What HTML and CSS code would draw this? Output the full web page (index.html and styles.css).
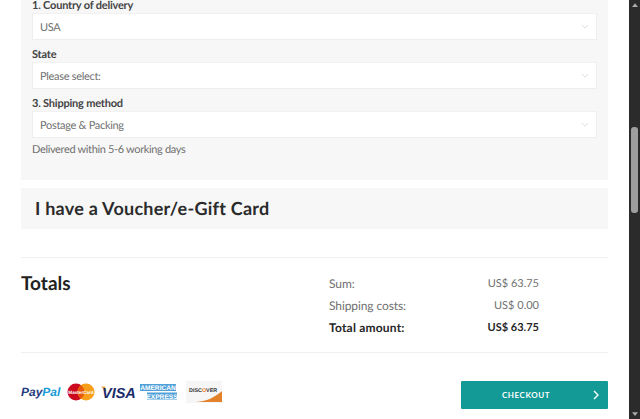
FILE: index.html
```html
<!DOCTYPE html>
<html lang="en">
<head>
    <meta charset="UTF-8">
    <meta name="viewport" content="width=device-width, initial-scale=1.0">
    <title>Checkout</title>
    <link rel="stylesheet" href="styles.css">
</head>
<body>
    <div class="page">
        <main class="content">
            <section class="shipping">
                <div class="form-group">
                    <label>1. Country of delivery</label>
                    <div class="select"><span>USA</span><svg class="chevron" viewBox="0 0 10 6"><path d="M1 1l4 4 4-4"/></svg></div>
                </div>
                <div class="form-group">
                    <label>State</label>
                    <div class="select"><span>Please select:</span><svg class="chevron" viewBox="0 0 10 6"><path d="M1 1l4 4 4-4"/></svg></div>
                </div>
                <div class="form-group">
                    <label>3. Shipping method</label>
                    <div class="select"><span>Postage &amp; Packing</span><svg class="chevron" viewBox="0 0 10 6"><path d="M1 1l4 4 4-4"/></svg></div>
                </div>
                <p class="hint">Delivered within 5-6 working days</p>
            </section>

            <section class="voucher">
                <h2>I have a Voucher/e-Gift Card</h2>
            </section>

            <section class="totals">
                <h2>Totals</h2>
                <div class="totals-table">
                    <span>Sum:</span><span class="amount">US$ 63.75</span>
                    <span>Shipping costs:</span><span class="amount">US$ 0.00</span>
                    <strong>Total amount:</strong><strong class="amount">US$ 63.75</strong>
                </div>
            </section>

            <section class="footer-row">
                <div class="payments">
                    <svg class="logo" width="40" height="14" viewBox="0 0 40 14">
                        <text x="0" y="11" class="pp-text"><tspan fill="#253b80">Pay</tspan><tspan fill="#179bd7">Pal</tspan></text>
                    </svg>
                    <svg class="logo" width="28" height="18" viewBox="0 0 28 18">
                        <circle cx="9" cy="9" r="8.5" fill="#cc0a1e"/>
                        <circle cx="19" cy="9" r="8.5" fill="#f79e1b"/>
                        <path d="M14 2.2a8.5 8.5 0 0 1 0 13.6a8.5 8.5 0 0 1 0-13.6z" fill="#e8590c"/>
                        <text x="14" y="10.5" class="mc-text">MasterCard</text>
                    </svg>
                    <svg class="logo" width="33" height="14" viewBox="0 0 33 14">
                        <path d="M0 1.5h4l1.5 5z" fill="#e9a13b"/>
                        <text x="1" y="13" class="visa-text">VISA</text>
                    </svg>
                    <svg class="logo" width="38" height="18" viewBox="0 0 38 18">
                        <rect x="0" y="1" width="36" height="7" fill="#4f9fd8"/>
                        <rect x="7" y="9.5" width="30" height="7" fill="#4f9fd8"/>
                        <text x="18" y="7" class="amex-text">AMERICAN</text>
                        <text x="22" y="15.5" class="amex-text">EXPRESS</text>
                    </svg>
                    <svg class="logo discover" width="36" height="22" viewBox="0 0 36 22">
                        <rect width="36" height="22" fill="#f6f6f6"/>
                        <path d="M36 10v11H10c12-1 19-5 26-11z" fill="#e4822c"/>
                        <text x="3" y="11" class="disc-text">DISC<tspan fill="#e4822c">O</tspan>VER</text>
                    </svg>
                </div>
                <button class="checkout" type="button">
                    <span>CHECKOUT</span>
                    <svg class="arrow" viewBox="0 0 6 10"><path d="M1 1l4 4-4 4"/></svg>
                </button>
            </section>
        </main>

        <div class="scrollbar">
            <svg class="scroll-arrow" viewBox="0 0 8 5"><path d="M4 0l4 5H0z"/></svg>
            <div class="thumb"></div>
            <svg class="scroll-arrow bottom" viewBox="0 0 8 5"><path d="M0 0h8L4 5z"/></svg>
        </div>
    </div>
</body>
</html>
```

FILE: styles.css
```css
*{
    margin: 0px;
    padding: 0px;
    box-sizing: border-box;
}
html, body {
    height: 100%;
    overflow: hidden;
    background-color: #fff;
}
body {
    font-family: Lato, "Open Sans", sans-serif;
    font-size: 11px;
    color: #707070;
    text-rendering: geometricPrecision;
}
.page {
    display: flex;
    height: 419px;
    overflow: hidden;
}
.content {
    flex: 1;
    padding: 0 21px;
    min-width: 0;
}

/* shipping panel, page is scrolled so the top is cut off */
.shipping {
    background-color: #f7f7f7;
    margin-top: -12px;
    padding: 7px 11px 0;
    height: 192px;
}
.form-group {
    margin-bottom: 4px;
}
label {
    display: block;
    height: 18px;
    line-height: 22px;
    font-size: 11px;
    font-weight: 700;
    color: #444;
    letter-spacing: -0.2px;
}
.select {
    display: flex;
    align-items: center;
    justify-content: space-between;
    height: 27px;
    padding: 0 7px 0 7px;
    background-color: #fff;
    border: 1px solid #eee;
    border-top-color: #f1f1f1;
    font-size: 11px;
    letter-spacing: -0.3px;
}
.select span {
    padding-top: 2px;
}
.chevron {
    width: 8px;
    height: 5px;
    fill: none;
    stroke: #d4d4d4;
    stroke-width: 1;
}
.hint {
    font-size: 11px;
    line-height: 16px;
    letter-spacing: -0.35px;
}

.voucher {
    margin-top: 8px;
    height: 41px;
    background-color: #f7f7f7;
    padding: 0 14px 2px;
    display: flex;
    align-items: center;
}
.voucher h2 {
    font-size: 18px;
    font-weight: 700;
    color: #2b2b2b;
    letter-spacing: 0.25px;
}

.totals {
    margin-top: 28px;
    height: 96px;
    border-top: 1px solid #f0f0f0;
    border-bottom: 1px solid #f0f0f0;
    display: flex;
    justify-content: space-between;
    padding: 15px 69px 0 0;
}
.totals h2 {
    font-size: 19px;
    line-height: 22px;
    font-weight: 700;
    color: #222;
}
.totals-table {
    width: 210px;
    display: grid;
    grid-template-columns: 1fr auto;
    grid-auto-rows: 22px;
    line-height: 22px;
    font-size: 12px;
    letter-spacing: -0.1px;
}
.totals-table strong {
    color: #262626;
    letter-spacing: 0.2px;
}
.totals-table .amount {
    text-align: right;
    font-size: 11px;
    letter-spacing: 0;
}

.footer-row {
    display: flex;
    justify-content: space-between;
    align-items: center;
    margin-top: 28px;
}
.payments {
    display: flex;
    align-items: center;
    gap: 6px;
    margin-bottom: 6px;
}
.logo {
    display: block;
    overflow: visible;
}
.discover {
    margin-left: 2px;
}
.pp-text {
    font-family: "Liberation Sans", sans-serif;
    font-size: 12px;
    font-weight: 700;
    font-style: italic;
}
.mc-text {
    font-family: "Liberation Sans", sans-serif;
    font-size: 4.6px;
    font-weight: 700;
    fill: #fff;
    text-anchor: middle;
}
.visa-text {
    font-family: "Liberation Sans", sans-serif;
    font-size: 14.5px;
    font-weight: 700;
    font-style: italic;
    fill: #1a2b6b;
}
.amex-text {
    font-family: "Liberation Sans", sans-serif;
    font-size: 6.6px;
    font-weight: 700;
    fill: #fff;
    text-anchor: middle;
}
.disc-text {
    font-family: "Liberation Sans", sans-serif;
    font-size: 5.4px;
    font-weight: 700;
    fill: #333;
}
.checkout {
    position: relative;
    width: 147px;
    height: 28px;
    padding-right: 17px;
    background-color: #149a96;
    color: #fff;
    border: none;
    border-radius: 1px;
    font-family: Lato, "Open Sans", sans-serif;
    font-size: 8px;
    font-weight: 700;
    letter-spacing: 0.55px;
}
.arrow {
    position: absolute;
    right: 9px;
    top: 9px;
    width: 6px;
    height: 10px;
    fill: none;
    stroke: #fff;
    stroke-width: 1.4;
}

.scrollbar {
    width: 11px;
    flex-shrink: 0;
    background-color: #2b2b2b;
    display: flex;
    flex-direction: column;
    align-items: center;
}
.scroll-arrow {
    width: 6px;
    height: 4px;
    margin-top: 3px;
    fill: #aaa;
}
.scroll-arrow.bottom {
    margin-top: auto;
    margin-bottom: 3px;
}
.thumb {
    width: 7px;
    height: 86px;
    margin-top: 120px;
    background-color: #9e9e9e;
    border-radius: 3px;
}
```
